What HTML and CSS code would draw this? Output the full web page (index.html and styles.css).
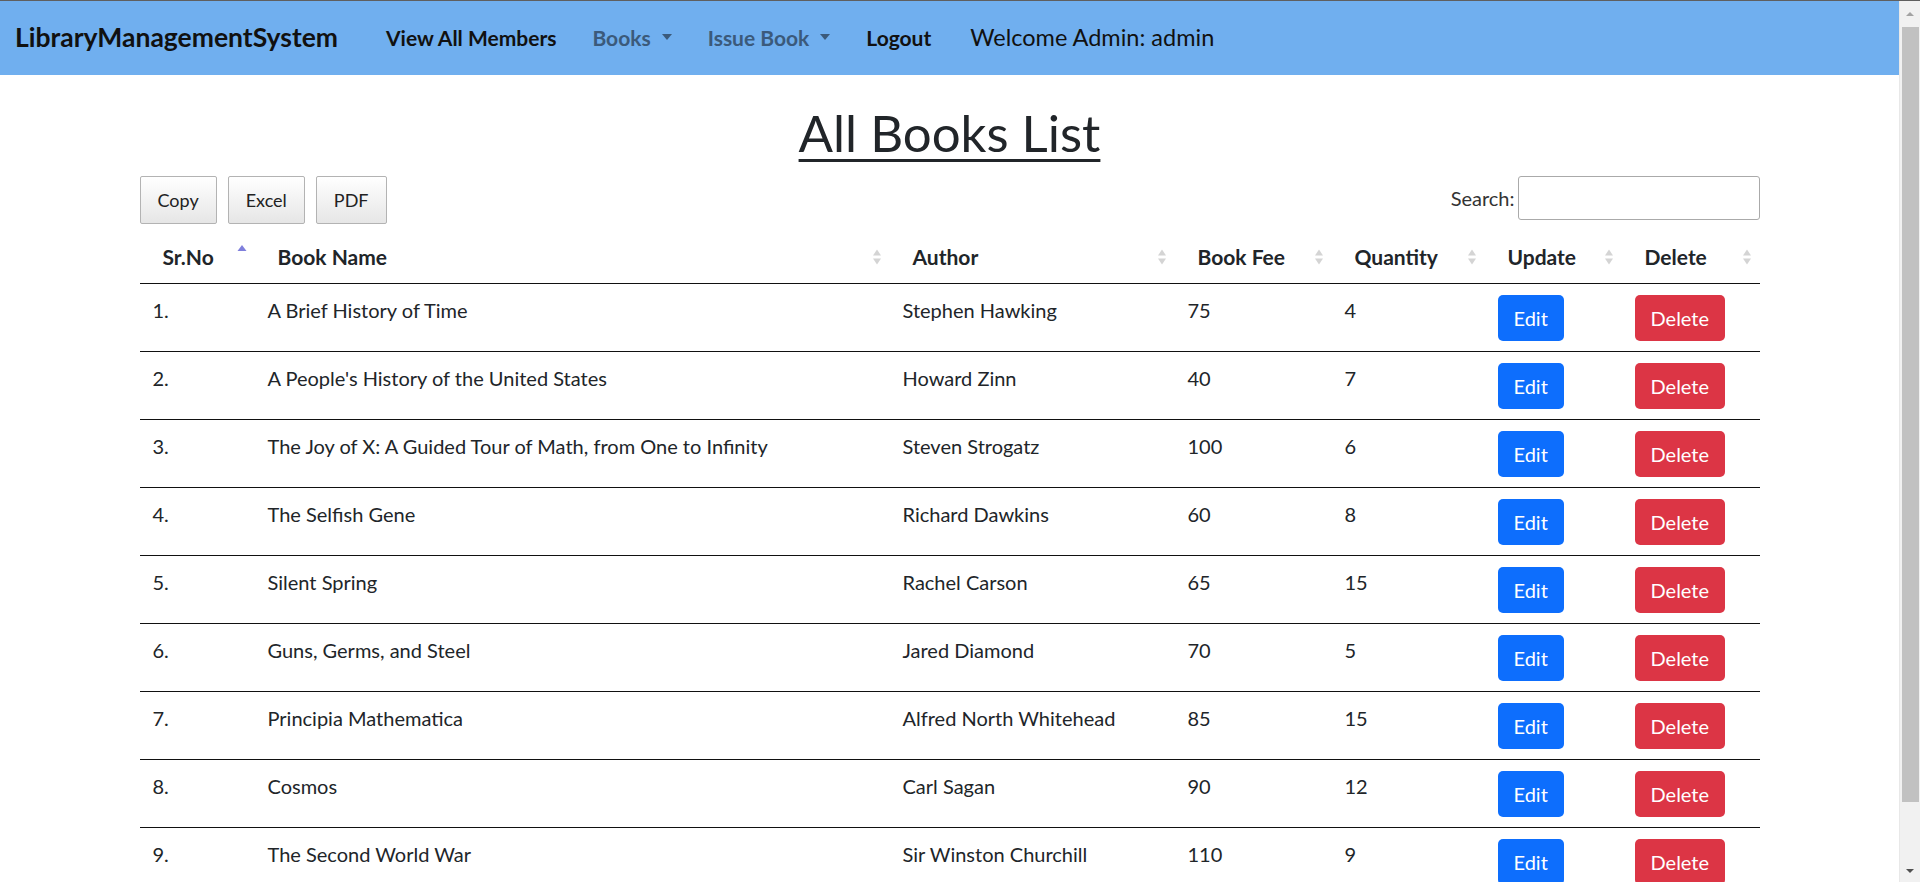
FILE: index.html
```html
<!DOCTYPE html>
<html lang="en">
<head>
<meta charset="utf-8">
<title>All Books List</title>
<link rel="stylesheet" href="styles.css">
</head>
<body>
<div class="page">
<nav class="navbar">
  <a class="brand" href="#">LibraryManagementSystem</a>
  <ul class="nav">
    <li><a class="nav-link" href="#">View All Members</a></li>
    <li><a class="nav-link muted" href="#">Books<span class="caret"></span></a></li>
    <li><a class="nav-link muted" href="#">Issue Book<span class="caret"></span></a></li>
    <li><a class="nav-link" href="#">Logout</a></li>
  </ul>
  <span class="welcome">Welcome Admin: admin</span>
</nav>

<main class="content">
  <h1 class="title">All Books List</h1>

  <div class="toolbar">
    <div class="dt-buttons">
      <button class="dt-button">Copy</button>
      <button class="dt-button">Excel</button>
      <button class="dt-button">PDF</button>
    </div>
    <label class="search">Search:<input type="search" class="search-input"></label>
  </div>

  <table class="books">
    <colgroup>
      <col class="c-no"><col class="c-name"><col class="c-author"><col class="c-fee"><col class="c-qty"><col class="c-upd"><col class="c-del">
    </colgroup>
    <thead>
      <tr>
        <th><div class="th-in"><span>Sr.No</span><svg class="sort sort-asc" viewBox="0 0 10 18" width="10" height="18"><polygon points="0.5,7 5,1 9.5,7" fill="#7f7fdc"/></svg></div></th>
        <th><div class="th-in"><span>Book Name</span><svg class="sort" viewBox="0 0 10 18" width="10" height="18"><polygon points="1,7.5 5,1.5 9,7.5" fill="#d4d4d4"/><polygon points="1,10.5 5,16.5 9,10.5" fill="#d4d4d4"/></svg></div></th>
        <th><div class="th-in"><span>Author</span><svg class="sort" viewBox="0 0 10 18" width="10" height="18"><polygon points="1,7.5 5,1.5 9,7.5" fill="#d4d4d4"/><polygon points="1,10.5 5,16.5 9,10.5" fill="#d4d4d4"/></svg></div></th>
        <th><div class="th-in"><span>Book Fee</span><svg class="sort" viewBox="0 0 10 18" width="10" height="18"><polygon points="1,7.5 5,1.5 9,7.5" fill="#d4d4d4"/><polygon points="1,10.5 5,16.5 9,10.5" fill="#d4d4d4"/></svg></div></th>
        <th><div class="th-in"><span>Quantity</span><svg class="sort" viewBox="0 0 10 18" width="10" height="18"><polygon points="1,7.5 5,1.5 9,7.5" fill="#d4d4d4"/><polygon points="1,10.5 5,16.5 9,10.5" fill="#d4d4d4"/></svg></div></th>
        <th><div class="th-in"><span>Update</span><svg class="sort" viewBox="0 0 10 18" width="10" height="18"><polygon points="1,7.5 5,1.5 9,7.5" fill="#d4d4d4"/><polygon points="1,10.5 5,16.5 9,10.5" fill="#d4d4d4"/></svg></div></th>
        <th><div class="th-in"><span>Delete</span><svg class="sort" viewBox="0 0 10 18" width="10" height="18"><polygon points="1,7.5 5,1.5 9,7.5" fill="#d4d4d4"/><polygon points="1,10.5 5,16.5 9,10.5" fill="#d4d4d4"/></svg></div></th>
      </tr>
    </thead>
    <tbody>
      <tr><td>1.</td><td>A Brief History of Time</td><td>Stephen Hawking</td><td>75</td><td>4</td><td><a class="btn btn-edit" href="#">Edit</a></td><td><a class="btn btn-delete" href="#">Delete</a></td></tr>
      <tr><td>2.</td><td>A People's History of the United States</td><td>Howard Zinn</td><td>40</td><td>7</td><td><a class="btn btn-edit" href="#">Edit</a></td><td><a class="btn btn-delete" href="#">Delete</a></td></tr>
      <tr><td>3.</td><td>The Joy of X: A Guided Tour of Math, from One to Infinity</td><td>Steven Strogatz</td><td>100</td><td>6</td><td><a class="btn btn-edit" href="#">Edit</a></td><td><a class="btn btn-delete" href="#">Delete</a></td></tr>
      <tr><td>4.</td><td>The Selfish Gene</td><td>Richard Dawkins</td><td>60</td><td>8</td><td><a class="btn btn-edit" href="#">Edit</a></td><td><a class="btn btn-delete" href="#">Delete</a></td></tr>
      <tr><td>5.</td><td>Silent Spring</td><td>Rachel Carson</td><td>65</td><td>15</td><td><a class="btn btn-edit" href="#">Edit</a></td><td><a class="btn btn-delete" href="#">Delete</a></td></tr>
      <tr><td>6.</td><td>Guns, Germs, and Steel</td><td>Jared Diamond</td><td>70</td><td>5</td><td><a class="btn btn-edit" href="#">Edit</a></td><td><a class="btn btn-delete" href="#">Delete</a></td></tr>
      <tr><td>7.</td><td>Principia Mathematica</td><td>Alfred North Whitehead</td><td>85</td><td>15</td><td><a class="btn btn-edit" href="#">Edit</a></td><td><a class="btn btn-delete" href="#">Delete</a></td></tr>
      <tr><td>8.</td><td>Cosmos</td><td>Carl Sagan</td><td>90</td><td>12</td><td><a class="btn btn-edit" href="#">Edit</a></td><td><a class="btn btn-delete" href="#">Delete</a></td></tr>
      <tr><td>9.</td><td>The Second World War</td><td>Sir Winston Churchill</td><td>110</td><td>9</td><td><a class="btn btn-edit" href="#">Edit</a></td><td><a class="btn btn-delete" href="#">Delete</a></td></tr>
      <tr><td>10.</td><td>On the Origin of Species</td><td>Charles Darwin</td><td>95</td><td>10</td><td><a class="btn btn-edit" href="#">Edit</a></td><td><a class="btn btn-delete" href="#">Delete</a></td></tr>
    </tbody>
  </table>
</main>
</div>

<div class="scrollbar" aria-hidden="true">
  <div class="sb-btn"><span class="sb-up"></span></div>
  <div class="sb-thumb"></div>
  <div class="sb-track"></div>
  <div class="sb-btn sb-btn-down"><span class="sb-down"></span></div>
</div>
</body>
</html>
```

FILE: styles.css
```css
* { box-sizing: border-box; }

html, body {
  margin: 0;
  padding: 0;
}

html { border-top: 1px solid #5f5f5f; }

body {
  font-family: "Lato", "Open Sans", sans-serif;
  color: #212529;
  background: #fff;
  font-size: 20px;
  line-height: 1.5;
}

a { text-decoration: none; }

.page {
  margin-right: 21px;
}

/* ---------- navbar ---------- */
.navbar {
  display: flex;
  align-items: center;
  height: 74px;
  background: #70afef;
  padding: 0 0 0 15px;
}

.brand {
  font-size: 26.5px;
  font-weight: 700;
  color: #111;
  margin-right: 30px;
}

.nav {
  display: flex;
  align-items: center;
  list-style: none;
  margin: 0;
  padding: 0;
}

.nav-link {
  display: inline-flex;
  align-items: center;
  padding: 8px 18px;
  font-size: 21px;
  font-weight: 700;
  color: #111;
}

.nav-link.muted {
  color: #3b5a7b;
}

.caret {
  display: inline-block;
  margin-left: 11px;
  width: 0;
  height: 0;
  border-top: 6px solid currentColor;
  border-left: 5px solid transparent;
  border-right: 5px solid transparent;
  position: relative;
  top: -1px;
}

.welcome {
  margin-left: 21px;
  font-size: 23.5px;
  color: #111;
}

/* ---------- content ---------- */
.content {
  width: 1620px;
  margin: 0 auto;
}

.title {
  margin: 27px 0 0;
  text-align: center;
  font-size: 51px;
  font-weight: 400;
  line-height: 1.2;
  text-decoration: underline;
  text-decoration-thickness: 3px;
  text-underline-offset: 7px;
  color: #212529;
}

.toolbar {
  display: flex;
  justify-content: space-between;
  align-items: center;
  margin-top: 13px;
}

.dt-buttons {
  display: flex;
  gap: 11px;
}

.dt-button {
  font-family: inherit;
  font-size: 18px;
  line-height: 1.6;
  padding: 8.5px 17px;
  color: #222;
  border: 1px solid #b3b3b3;
  border-radius: 2px;
  background: linear-gradient(to bottom, #ffffff 0%, #e6e6e6 100%);
}

.search {
  display: flex;
  align-items: center;
  gap: 3px;
  font-size: 20px;
  color: #333;
  margin-top: -4px;
}

.search-input {
  width: 242px;
  height: 44px;
  border: 1px solid #aaa;
  border-radius: 3px;
  background: #fff;
}

/* ---------- table ---------- */
.books {
  width: 100%;
  table-layout: fixed;
  border-collapse: collapse;
  margin-top: 9px;
}

.c-no { width: 115px; }
.c-name { width: 635px; }
.c-author { width: 285px; }
.c-fee { width: 157px; }
.c-qty { width: 153px; }
.c-upd { width: 137px; }
.c-del { width: 138px; }

.books th {
  text-align: left;
  font-weight: 700;
  font-size: 21px;
  line-height: 28px;
  padding: 10px 8px 12px 23px;
  border-bottom: 1px solid #111;
}

.th-in {
  display: flex;
  justify-content: space-between;
  align-items: center;
}

.sort { flex: none; }

.sort-asc {
  position: relative;
  top: -4px;
}

.books td {
  vertical-align: top;
  padding: 11px 13px 10px 13px;
  border-bottom: 1px solid #111;
  line-height: 30px;
}

.btn {
  display: inline-block;
  vertical-align: top;
  font-size: 20px;
  line-height: 30px;
  padding: 8px 16px;
  border-radius: 5px;
  color: #fff;
}

.btn-edit { background: #0d6efd; }
.btn-delete { background: #dc3545; }

/* ---------- fake browser scrollbar (overlay) ---------- */
.scrollbar {
  position: fixed;
  top: 1px;
  right: 0;
  bottom: 0;
  width: 21px;
  display: flex;
  flex-direction: column;
  align-items: center;
  background: #f1f1f1;
  border-left: 1px solid #e8e8e8;
}

.sb-btn {
  height: 26px;
  width: 100%;
  display: flex;
  align-items: center;
  justify-content: center;
}

.sb-btn-down { height: 22px; }

.sb-up, .sb-down {
  width: 0;
  height: 0;
  border-left: 4px solid transparent;
  border-right: 4px solid transparent;
}

.sb-up { border-bottom: 4px solid #a3a3a3; }
.sb-down { border-top: 4px solid #505050; }

.sb-thumb {
  width: 17px;
  height: 775px;
  background: #c1c1c1;
}

.sb-track { flex: 1; }
```
